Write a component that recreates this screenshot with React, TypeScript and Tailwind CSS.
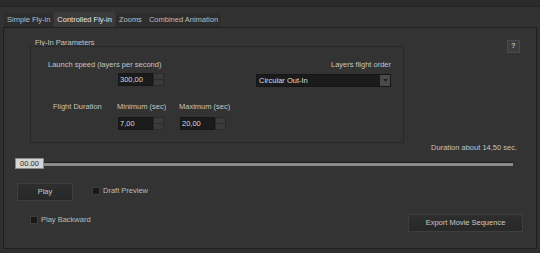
import React from 'react'

const font = { fontFamily: '"Liberation Sans", Arial, sans-serif' }

function SpinBox({ value, width }: { value: string; width: string }) {
  return (
    <div className={`flex h-[13px] ${width}`}>
      <div className="flex-1 bg-[#1b1b1b] border border-[#161616] pl-[1px] text-[7.5px] leading-[11px] text-[#d8d8d8]">
        {value}
      </div>
      <div className="w-[11px] flex flex-col bg-[#3b3b3b] border border-[#2a2a2a]">
        <div className="flex-1 border-b border-[#2c2c2c]" />
        <div className="flex-1" />
      </div>
    </div>
  )
}

function Tab({ label, active }: { label: string; active?: boolean }) {
  return (
    <div
      className={
        active
          ? 'h-[15px] px-[3px] bg-[#3b3b3b] text-[#e6e6e6] text-[7.5px] leading-[15px] mr-[1px]'
          : 'h-[14px] px-[3px] bg-[#2d2d2d] text-[#bdbdbd] text-[7.5px] leading-[14px] mr-[1px]'
      }
    >
      {label}
    </div>
  )
}

function Check({ label }: { label: string }) {
  return (
    <div className="flex items-center">
      <div className="w-[8px] h-[8px] bg-[#181818] border border-[#3c3c3c]" />
      <span className="ml-[3px] text-[7.5px] leading-[9px] text-[#bcbcbc]">{label}</span>
    </div>
  )
}

export default function App() {
  return (
    <div className="w-[540px] h-[253px] overflow-hidden bg-[#2f2f2f] flex flex-col" style={font}>
      <div className="h-[7px] bg-[#2a2a2a] border-b border-[#242424]" />

      {/* tabs */}
      <div className="h-[20px] flex items-end pl-[4px] bg-[#323232]">
        <Tab label="Simple Fly-in" />
        <Tab label="Controlled Fly-in" active />
        <Tab label="Zooms" />
        <Tab label="Combined Animation" />
      </div>

      {/* panel */}
      <div className="mx-[3px] h-[222px] border border-[#1f1f1f] bg-[#333333] flex flex-col">
        <div className="flex">
          <div className="ml-[26px] flex flex-col">
            <div className="mt-[11px] h-[7px] pl-[5px] text-[7.5px] leading-[7px] text-[#c4c4c4]">
              Fly-In Parameters
            </div>
            <div className="w-[374px] h-[97px] border border-[#272727] flex flex-col">
              <div className="flex mt-[13px]">
                <div className="ml-[17px] w-[208px] flex flex-col">
                  <div className="h-[9px] text-[7.5px] leading-[9px] text-[#c4c4c4]">
                    Launch speed (layers per second)
                  </div>
                  <div className="mt-[4px] ml-[70px]">
                    <SpinBox value="300,00" width="w-[46px]" />
                  </div>
                </div>
                <div className="w-[135px] flex flex-col">
                  <div className="h-[9px] text-right text-[7.5px] leading-[9px] text-[#c4c4c4]">
                    Layers flight order
                  </div>
                  <div className="mt-[5px] h-[13px] flex bg-[#1b1b1b] border border-[#161616]">
                    <div className="flex-1 pl-[2px] text-[7.5px] leading-[11px] text-[#dedede]">
                      Circular Out-In
                    </div>
                    <div className="w-[10px] bg-[#4a4a4a] flex items-center justify-center">
                      <svg width="5" height="3" viewBox="0 0 5 3">
                        <path d="M0 0 L5 0 L2.5 3 Z" fill="#222" />
                      </svg>
                    </div>
                  </div>
                </div>
              </div>

              <div className="flex mt-[15px]">
                <div className="ml-[22px] w-[64px] h-[9px] text-[7.5px] leading-[9px] text-[#c4c4c4]">
                  Flight Duration
                </div>
                <div className="w-[62px] flex flex-col">
                  <div className="h-[9px] text-[7.5px] leading-[9px] text-[#c4c4c4]">Minimum (sec)</div>
                  <div className="mt-[6px] ml-[1px]">
                    <SpinBox value="7,00" width="w-[46px]" />
                  </div>
                </div>
                <div className="flex flex-col">
                  <div className="h-[9px] text-[7.5px] leading-[9px] text-[#c4c4c4]">Maximum (sec)</div>
                  <div className="mt-[6px] ml-[1px]">
                    <SpinBox value="20,00" width="w-[46px]" />
                  </div>
                </div>
              </div>
            </div>
          </div>

          <div className="ml-auto mr-[16px] mt-[12px] w-[13px] h-[13px] bg-[#3d3d3d] border border-[#4a4a4a] flex items-center justify-center text-[7px] font-bold text-[#bdbdbd]">
            ?
          </div>
        </div>

        <div className="h-[9px] pr-[19px] text-right text-[7.5px] leading-[9px] text-[#c4c4c4]">
          Duration about 14,50 sec.
        </div>

        {/* slider */}
        <div className="relative mt-[6px] ml-[11px] w-[498px] h-[11px] flex items-center">
          <div className="w-full h-[4px] bg-[#8c8c8c] border-t border-[#1e1e1e]" />
          <div className="absolute left-0 top-0 w-[29px] h-[11px] bg-[#d6d6d6] border border-[#8a8a8a] text-center text-[7.5px] leading-[9px] text-[#2a2a2a]">
            00.00
          </div>
        </div>

        <div className="flex items-start mt-[14px] ml-[13px]">
          <div className="w-[56px] h-[18px] bg-gradient-to-b from-[#2e2e2e] to-[#282828] border border-[#3e3e3e] text-center text-[7.5px] leading-[16px] text-[#c8c8c8]">
            Play
          </div>
          <div className="ml-[19px] mt-[3px]">
            <Check label="Draft Preview" />
          </div>
        </div>

        <div className="flex items-start mt-[13px]">
          <div className="ml-[26px] mt-[1px]">
            <Check label="Play Backward" />
          </div>
          <div className="ml-auto mr-[13px] w-[115px] h-[18px] bg-gradient-to-b from-[#2e2e2e] to-[#282828] border border-[#3e3e3e] text-center text-[7.5px] leading-[16px] text-[#c8c8c8]">
            Export Movie Sequence
          </div>
        </div>
      </div>
    </div>
  )
}
